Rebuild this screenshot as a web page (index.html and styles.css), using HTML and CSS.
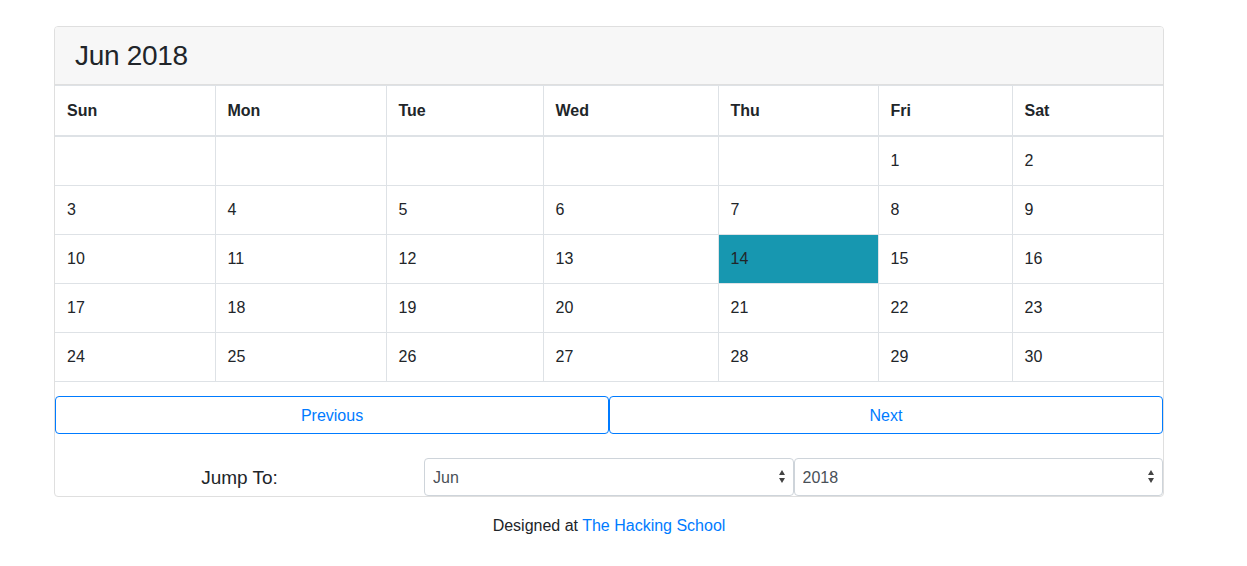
FILE: index.html
```html
<!DOCTYPE html>
<html>
<head>
<meta charset="utf-8">
<link rel="stylesheet" href="styles.css">
</head>
<body>
<div class="page">
  <div class="card">
    <div class="card-header"><h3>Jun 2018</h3></div>
    <table class="cal">
      <thead>
        <tr>
          <th class="c1">Sun</th><th class="c2">Mon</th><th class="c3">Tue</th><th class="c4">Wed</th><th class="c5">Thu</th><th class="c6">Fri</th><th class="c7">Sat</th>
        </tr>
      </thead>
      <tbody>
        <tr><td></td><td></td><td></td><td></td><td></td><td>1</td><td>2</td></tr>
        <tr><td>3</td><td>4</td><td>5</td><td>6</td><td>7</td><td>8</td><td>9</td></tr>
        <tr><td>10</td><td>11</td><td>12</td><td>13</td><td class="today">14</td><td>15</td><td>16</td></tr>
        <tr><td>17</td><td>18</td><td>19</td><td>20</td><td>21</td><td>22</td><td>23</td></tr>
        <tr><td>24</td><td>25</td><td>26</td><td>27</td><td>28</td><td>29</td><td>30</td></tr>
      </tbody>
    </table>
    <div class="nav-row">
      <button class="btn">Previous</button>
      <button class="btn">Next</button>
    </div>
    <div class="jump-row">
      <label class="jump-label" for="month">Jump To:</label>
      <div class="select-wrap">
        <select id="month" class="sel">
          <option>Jan</option><option>Feb</option><option>Mar</option><option>Apr</option><option>May</option><option selected>Jun</option><option>Jul</option><option>Aug</option><option>Sep</option><option>Oct</option><option>Nov</option><option>Dec</option>
        </select>
      </div>
      <div class="select-wrap">
        <select id="year" class="sel">
          <option>2017</option><option selected>2018</option><option>2019</option>
        </select>
      </div>
    </div>
  </div>
  <p class="footer">Designed at <a href="#">The Hacking School</a></p>
</div>
</body>
</html>
```

FILE: styles.css
```css
* { box-sizing: border-box; }
html, body { margin: 0; padding: 0; background: #fff; }
body {
  font-family: "Liberation Sans", Arial, sans-serif;
  font-size: 16px;
  line-height: 24px;
  color: #212529;
}
.page {
  padding: 26px 0 0 54px;
  width: 1164px;
}
.card {
  width: 1110px;
  border: 1px solid #dfdfdf;
  border-radius: 4px;
}
.card-header {
  background: #f7f7f7;
  border-bottom: 1px solid #dfdfdf;
  border-radius: 3px 3px 0 0;
  padding: 12px 20px;
}
.card-header h3 {
  margin: 0;
  font-size: 28px;
  font-weight: 500;
  line-height: 33px;
  letter-spacing: -0.3px;
}
.cal {
  width: 1108px;
  border-collapse: collapse;
  table-layout: fixed;
  margin-bottom: 14px;
}
.cal th, .cal td {
  border: 1px solid #dee2e6;
  padding: 12px;
  text-align: left;
  vertical-align: top;
  height: 49px;
}
.cal tr > :first-child { border-left: 0; }
.cal tr > :last-child { border-right: 0; }
.cal th {
  font-weight: bold;
  border-bottom-width: 2px;
  height: 50px;
  padding: 13px 12px 11px;
}
.c1 { width: 160px; }
.c2 { width: 171px; }
.c3 { width: 157px; }
.c4 { width: 175px; }
.c5 { width: 160px; }
.c6 { width: 134px; }
.c7 { width: 151px; }
.cal td.today { background: #1797b0; }
.nav-row {
  display: flex;
}
.btn {
  flex: 0 0 50%;
  height: 38px;
  padding: 2px 12px 0;
  font-family: inherit;
  font-size: 16px;
  color: #007bff;
  background: #fff;
  border: 1px solid #007bff;
  border-radius: 4px;
  cursor: pointer;
}
.jump-row {
  display: flex;
  align-items: center;
  margin-top: 24px;
}
.jump-label {
  flex: 1 1 auto;
  text-align: center;
  font-size: 19px;
  font-weight: 300;
  margin: 0 8px;
  padding-top: 2px;
}
.select-wrap {
  position: relative;
  flex: 0 0 369.5px;
}
.select-wrap::before, .select-wrap::after {
  content: "";
  position: absolute;
  right: 9px;
  width: 0;
  height: 0;
  border-left: 3.5px solid transparent;
  border-right: 3.5px solid transparent;
  pointer-events: none;
}
.select-wrap::before {
  top: 12px;
  border-bottom: 5px solid #444;
}
.select-wrap::after {
  top: 20px;
  border-top: 5px solid #444;
}
.sel {
  -webkit-appearance: none;
  appearance: none;
  width: 100%;
  height: 38px;
  padding: 2px 8px 0;
  font-family: inherit;
  font-size: 16px;
  color: #495057;
  background: #fff;
  border: 1px solid #ced4da;
  border-radius: 4px;
}
.footer {
  width: 1110px;
  text-align: center;
  margin: 17px 0 0 0;
}
.footer a { color: #007bff; text-decoration: none; }
```
